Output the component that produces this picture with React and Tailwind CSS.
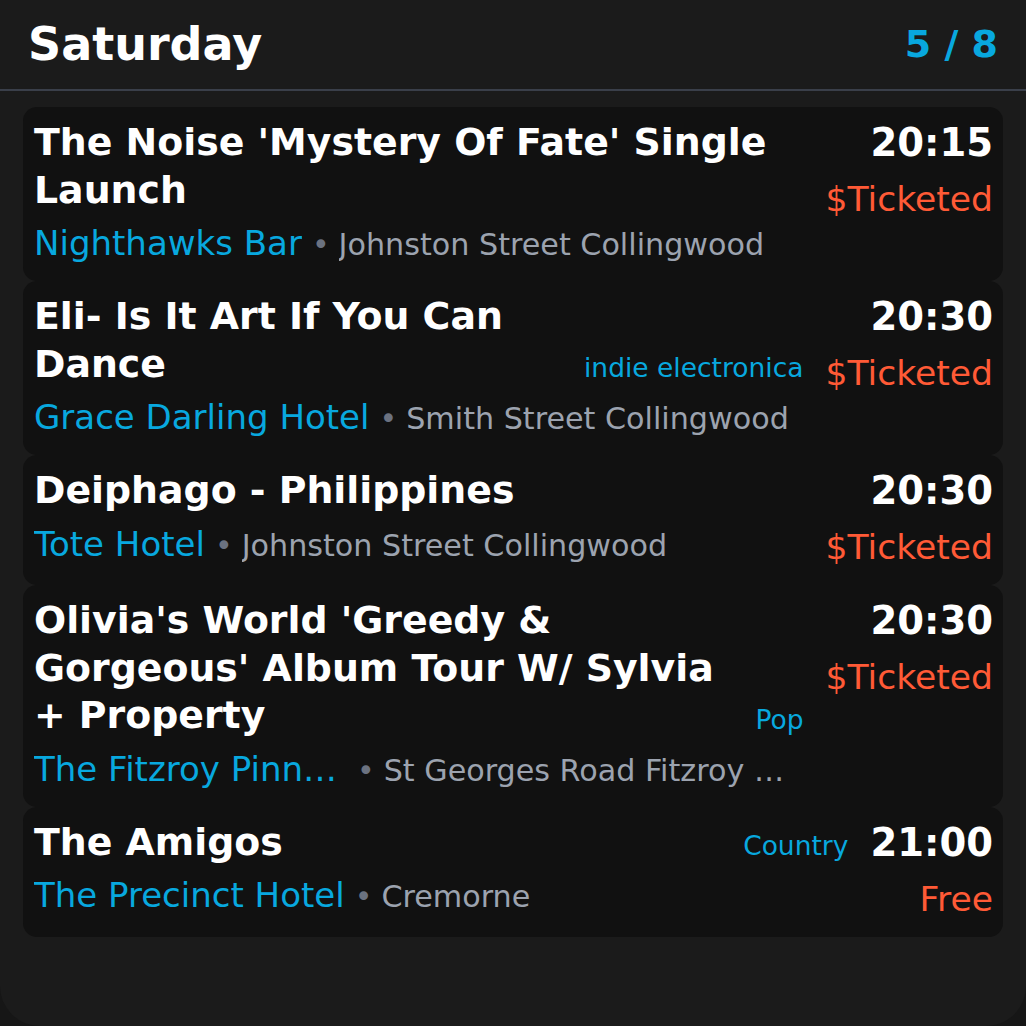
import React from "react";

const events = [
  {
    title: "The Noise 'Mystery Of Fate' Single Launch",
    venue: "Nighthawks Bar",
    address: "Johnston Street Collingwood",
    time: "20:15",
    price: "$Ticketed",
  },
  {
    title: "Eli- Is It Art If You Can Dance",
    genre: "indie electronica",
    venue: "Grace Darling Hotel",
    address: "Smith Street Collingwood",
    time: "20:30",
    price: "$Ticketed",
  },
  {
    title: "Deiphago - Philippines",
    venue: "Tote Hotel",
    address: "Johnston Street Collingwood",
    time: "20:30",
    price: "$Ticketed",
  },
  {
    title: "Olivia's World 'Greedy & Gorgeous' Album Tour W/ Sylvia + Property",
    genre: "Pop",
    venue: "The Fitzroy Pinnacle",
    address: "St Georges Road Fitzroy North",
    time: "20:30",
    price: "$Ticketed",
  },
  {
    title: "The Amigos",
    genre: "Country",
    venue: "The Precinct Hotel",
    address: "Cremorne",
    time: "21:00",
    price: "Free",
  },
];

function Card({ e }) {
  return (
    <div className="flex gap-[22px] rounded-[14px] bg-[#111111] pl-[11px] pr-[10px] pt-3 pb-3">
      <div className="flex min-w-0 flex-1 flex-col">
        <div className="flex items-end gap-3">
          <div className="min-w-0 flex-1 text-[37.85px] font-bold leading-[47.5px] text-white">
            {e.title}
          </div>
          {e.genre && (
            <div className="shrink-0 text-[26.5px] leading-[40px] text-[#08a8df]">
              {e.genre}
            </div>
          )}
        </div>
        <div className="mt-1.5 flex h-[49px] min-w-0 items-baseline overflow-hidden leading-[46px]">
          <span className="min-w-0 truncate text-[34px] text-[#08a8df]">{e.venue}</span>
          <span className="ml-[10px] shrink-0 text-[30px] text-[#6b7280]">•</span>
          <span className="ml-[9px] min-w-0 truncate text-[30.2px] text-[#9ca3af]">
            {e.address}
          </span>
        </div>
      </div>
      <div className="flex shrink-0 flex-col items-end">
        <div className="text-[38.5px] font-bold leading-[48px] text-white">{e.time}</div>
        <div className="mt-[6px] text-[34.6px] leading-[52px] text-[#ff5a36]">{e.price}</div>
      </div>
    </div>
  );
}

export default function App() {
  return (
    <div
      className="h-[1026px] w-full bg-[#161616]"
      style={{ fontFamily: '"DejaVu Sans", sans-serif' }}
    >
      <div className="h-full w-full overflow-hidden rounded-b-[40px] bg-[#1b1b1b]">
        <div className="flex h-[91px] items-center justify-between border-b-2 border-[#3a3f4a] px-7 pb-[2px]">
          <div className="text-[46px] font-bold leading-none text-white">Saturday</div>
          <div className="text-[38px] font-bold leading-none text-[#08a8df]">5 / 8</div>
        </div>
        <div className="flex flex-col px-[23px] pt-4">
          {events.map((e, i) => (
            <Card key={i} e={e} />
          ))}
        </div>
      </div>
    </div>
  );
}
